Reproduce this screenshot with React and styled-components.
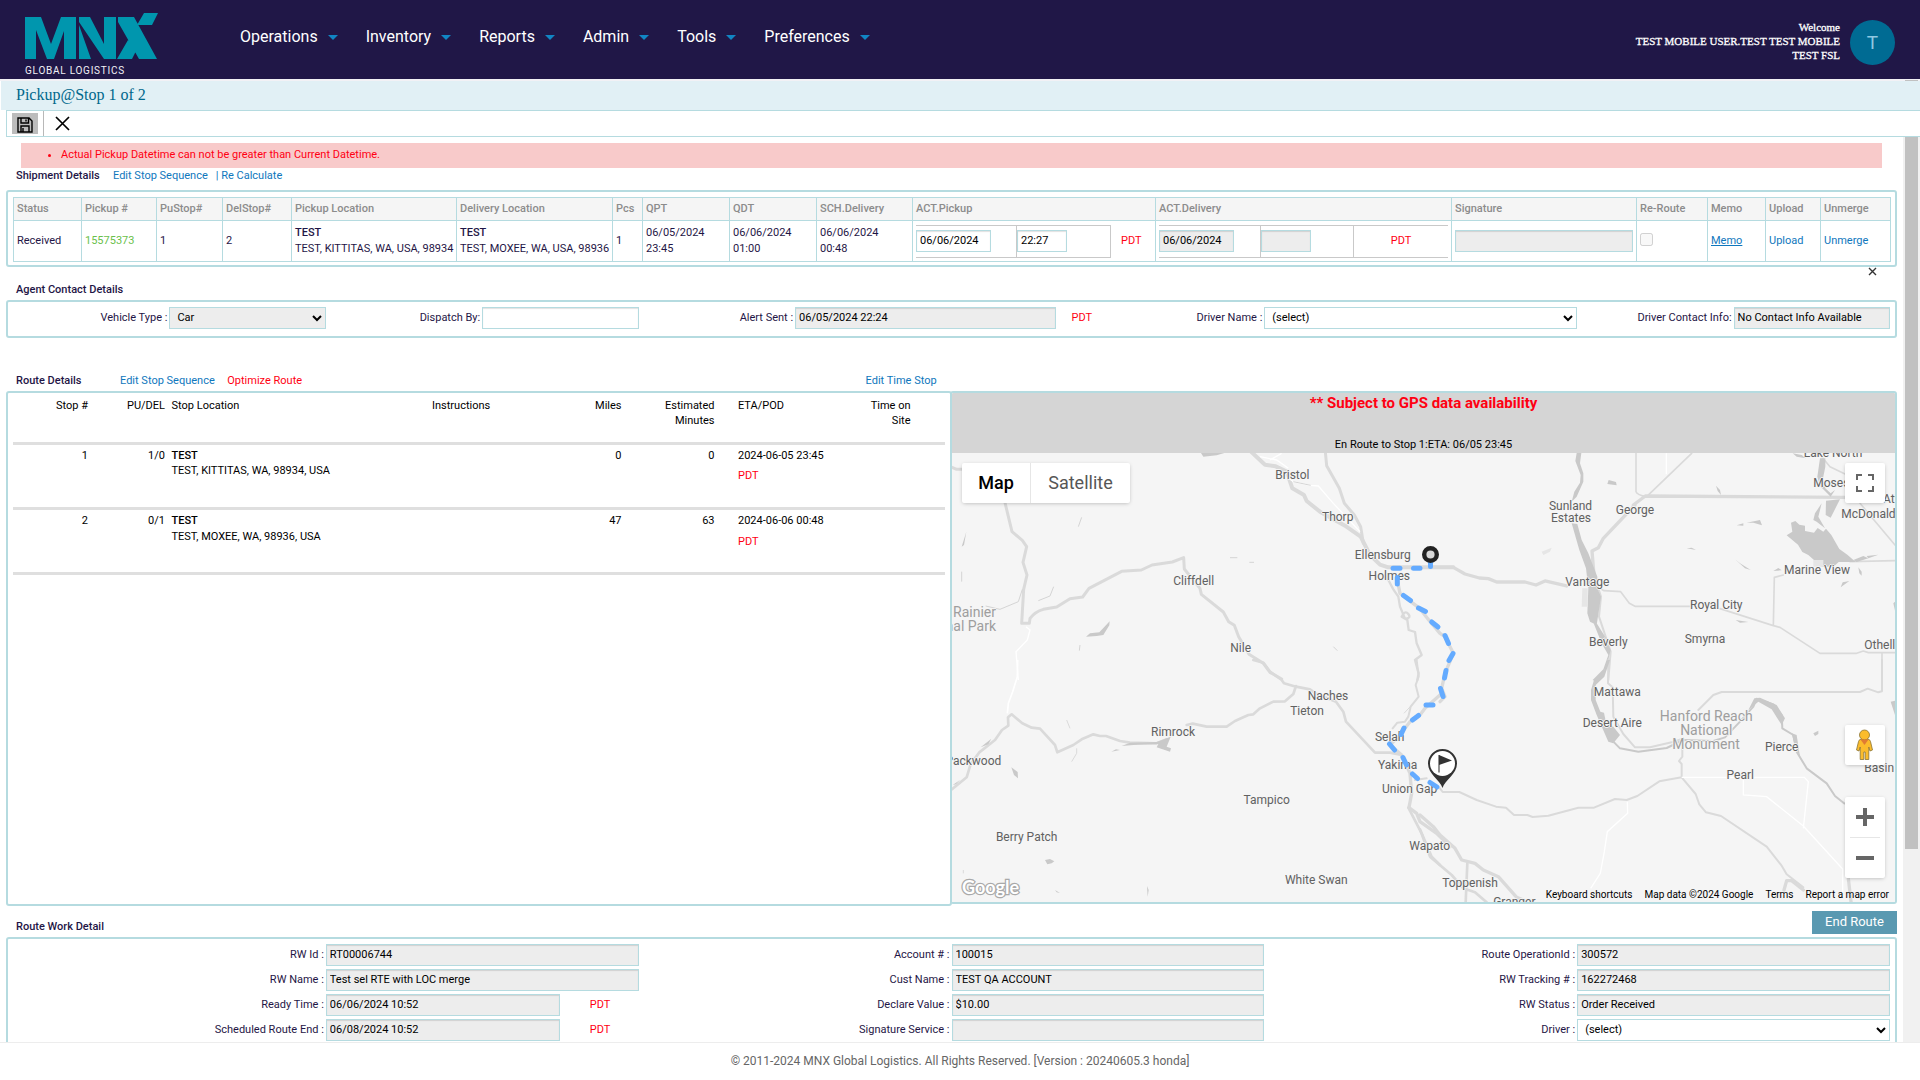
import React from "react";
import styled, { createGlobalStyle, css } from "styled-components";

const teal = "#b5dbe0";
const link = "#0f77bd";

const Global = createGlobalStyle`
  * { box-sizing: border-box; }
  body { margin: 0; font: 11px/16px Roboto, "Liberation Sans", sans-serif; color: #1f1646; background: #fff; overflow: hidden; }
  input, select { font: inherit; margin: 0; }
`;

const Page = styled.div`
  display: flex;
  flex-direction: column;
  width: 1920px;
  height: 1080px;
  overflow: hidden;
`;

/* ---------- header ---------- */
const Header = styled.header`
  display: flex;
  height: 79px;
  flex: none;
  background: #201747;
  padding: 13px 25px 0 25px;
`;
const Logo = styled.div`
  width: 215px;
  svg { display: block; }
`;
const LogoText = styled.div`
  margin-top: 2px;
  font-size: 10px;
  letter-spacing: 0.75px;
  line-height: 16px;
  color: #f0f0f5;
  white-space: nowrap;
`;
const Nav = styled.nav`
  display: flex;
  height: 48px;
  align-items: center;
  gap: 28px;
  flex: 1;
`;
const NavItem = styled.a`
  display: flex;
  align-items: center;
  font-size: 16px;
  line-height: 20px;
  color: #fff;
  &::after {
    content: "";
    margin: 1px 0 0 10px;
    border: 5px solid transparent;
    border-top: 5px solid #1185c4;
    border-bottom: 0;
  }
`;
const User = styled.div`
  margin: 7px 10px 0 0;
  font: 11px/14px "Liberation Serif", serif;
  -webkit-text-stroke: 0.3px #fff;
  color: #fff;
  text-align: right;
`;
const Avatar = styled.div`
  width: 45px;
  height: 45px;
  margin-top: 7px;
  border-radius: 50%;
  background: #006b93;
  color: #8fc8e2;
  font-size: 19px;
  line-height: 45px;
  text-align: center;
`;
const Strip = styled.div`
  flex: none;
  height: 2px;
  background: #f2f1f5;
  display: flex;
  justify-content: flex-end;
  padding: 1px 2px 0 0;
  &::after { content: ""; width: 13px; height: 1px; background: #c1c1c1; }
`;
const TitleBar = styled.div`
  flex: none;
  height: 29px;
  margin-left: 1px;
  padding-left: 15px;
  background: #e1f0f5;
  color: #00688c;
  font: 16px/27px "Liberation Serif", serif;
`;
const Toolbar = styled.div`
  flex: none;
  height: 27px;
  margin-left: 6px;
  border: 1px solid ${teal};
  border-right: 0;
  display: flex;
  align-items: center;
`;
const SaveButton = styled.div`
  width: 26px;
  height: 21px;
  margin: 0 5px;
  background: #bcbcbc;
  display: flex;
  align-items: flex-end;
  justify-content: center;
  padding-bottom: 1px;
`;
const CloseButton = styled.div`
  height: 25px;
  padding-left: 11px;
  border-left: 1px solid #b8b8b8;
  display: flex;
  align-items: center;
`;

/* ---------- page body ---------- */
const Body = styled.div`
  flex: none;
  height: 905px;
  display: flex;
  overflow: hidden;
`;
const Content = styled.main`
  width: 1903px;
  padding: 6px 6px 0 6px;
`;
const Track = styled.div`
  width: 17px;
  background: #f1f1f1;
  padding: 0 2px;
  &::before { content: ""; display: block; height: 712px; background: #c1c1c1; }
`;
const ErrorBox = styled.ul`
  margin: 0 15px;
  width: 1861px;
  height: 25px;
  padding: 0 0 0 40px;
  line-height: 23px;
  background: #f8caca;
  color: #ff0012;
`;
const Heading = styled.div`
  display: flex;
  width: 1891px;
  height: ${(p) => p.$h}px;
  padding: ${(p) => p.$top}px 0 0 10px;
  white-space: nowrap;
`;
const Title = styled.b`
  font-weight: 500;
  width: ${(p) => p.$w || "auto"};
`;
const Link = styled.a`
  color: ${(p) => (p.$red ? "#ff0012" : link)};
  text-decoration: ${(p) => (p.$line ? "underline" : "none")};
  margin-right: ${(p) => p.$gap || 0}px;
`;
const Push = styled.span`
  margin-left: ${(p) => p.$left}px;
`;
const Panel = styled.section`
  width: 1891px;
  height: ${(p) => p.$h}px;
  border: 2px solid ${teal};
  border-radius: 3px;
  padding: 5px;
`;

/* ---------- shipment table ---------- */
const Table = styled.table`
  width: 1877px;
  height: 64px;
  table-layout: fixed;
  border-collapse: collapse;
  white-space: nowrap;
  th, td { border: 1px solid ${teal}; padding: 0 3px; text-align: left; }
  th { height: 23px; background: #f5f5f5; color: #8c8c8c; font-weight: 500; }
  td { height: 41px; }
`;
const Green = styled.span`
  color: #6abf4b;
`;
const Field = styled.input`
  display: block;
  width: ${(p) => p.$w || "100%"};
  height: 22px;
  border: 1px solid ${teal};
  border-radius: 0;
  padding: 0 0 1px 3px;
  background: ${(p) => (p.$edit ? "#fff" : "#ededed")};
  color: #000;
  box-shadow: inset 0 1px 1px rgba(0, 0, 0, 0.12);
  outline: 0;
`;
const Select = styled.select`
  display: block;
  width: ${(p) => p.$w || "100%"};
  height: 22px;
  border: 1px solid ${teal};
  border-radius: 0;
  padding: 0 1px 1px 3px;
  background-color: ${(p) => (p.$gray ? "#ededed" : "#fff")};
  color: #000;
  outline: 0;
`;
const TimeGroup = styled.div`
  display: flex;
  align-items: center;
  height: 33px;
`;
const TimeCell = styled.div`
  width: ${(p) => p.$w}px;
  height: 33px;
  padding-top: ${(p) => p.$pad || 4}px;
  border: 0 solid #c9c9c9;
  border-width: 1px 0;
  ${(p) => p.$right && css`border-right-width: 1px;`}
`;
const Zone = styled.span`
  color: #ff0012;
  padding-left: ${(p) => p.$left || 0}px;
  ${(p) => p.$mid && css`line-height: 20px; display: block; text-align: center;`}
`;
const Check = styled.input`
  display: block;
  width: 13px;
  height: 13px;
  margin: 0 0 4px 0;
`;
const CloseX = styled.div`
  width: 1891px;
  height: 14px;
  padding: 0 20px 0 0;
  display: flex;
  justify-content: flex-end;
  align-items: flex-start;
`;

/* ---------- forms: twelve equal columns ---------- */
const FormRow = styled.div`
  display: grid;
  grid-template-columns: repeat(12, 1fr);
  height: 25px;
  line-height: 21px;
  align-items: start;
`;
const Label = styled.label`
  grid-column: span ${(p) => p.$span || 1};
  text-align: right;
  padding-right: 2px;
  white-space: nowrap;
`;
const Cell = styled.div`
  grid-column: span ${(p) => p.$span || 1};
  display: flex;
  min-width: 0;
`;

/* ---------- route ---------- */
const Route = styled.div`
  display: flex;
  width: 1891px;
  height: 515px;
  align-items: flex-start;
`;
const Stops = styled.section`
  width: 946px;
  height: 515px;
  border: 2px solid ${teal};
  border-radius: 3px;
  padding: 0 5px;
  color: #000;
`;
const StopRow = styled.div`
  display: grid;
  grid-template-columns: 75px 77px 267px 103px 86.5px 93px 196px 1fr;
  height: ${(p) => p.$h}px;
  padding-top: ${(p) => p.$top}px;
  border-bottom: 3px solid #dfdfdf;
  line-height: ${(p) => p.$line || 15}px;
`;
const StopCell = styled.div`
  text-align: ${(p) => (p.$right ? "right" : "left")};
  padding-left: ${(p) => p.$left || 0}px;
  b { font-weight: 500; }
`;
const EtaBox = styled.div`
  display: flex;
  justify-content: space-between;
  padding-left: 23.5px;
  text-align: right;
`;
const Pdt = styled.div`
  color: #ff0012;
  margin-top: 5px;
`;
const MapPanel = styled.section`
  width: 947px;
  height: 513px;
  margin-left: -2px;
  border: 2px solid ${teal};
  border-radius: 3px;
  overflow: hidden;
`;
const MapHead = styled.div`
  height: 60px;
  background: #d5d5d5;
  text-align: center;
  color: #000;
  padding-top: 2px;
  h4 { margin: 0 0 25px; font: 700 15px/17px Roboto, sans-serif; color: #ff0012; }
`;
const MapView = styled.div`
  position: relative;
  width: 943px;
  height: 449px;
  overflow: hidden;
  background: #f5f5f5;
  > svg { display: block; }
`;
const Place = styled.span`
  position: absolute;
  transform: translate(${(p) => (p.$anchor === "l" ? "0" : p.$anchor === "r" ? "-100%" : "-50%")}, -50%);
  font-size: ${(p) => (p.$park ? 14 : 12)}px;
  line-height: ${(p) => (p.$park ? 14 : 12)}px;
  color: ${(p) => (p.$park ? "#9e9e9e" : "#616161")};
  text-shadow: 1px 0 #f5f5f5, -1px 0 #f5f5f5, 0 1px #f5f5f5, 0 -1px #f5f5f5;
  text-align: center;
  white-space: pre;
`;
const Overlay = styled.svg`
  position: absolute;
  inset: 0;
`;
const Control = styled.div`
  position: absolute;
  right: 10px;
  top: ${(p) => p.$top}px;
  width: 40px;
  height: ${(p) => p.$h || 40}px;
  background: #fff;
  border-radius: 2px;
  box-shadow: 0 1px 4px -1px rgba(0, 0, 0, 0.3);
`;
const MapTypes = styled.div`
  position: absolute;
  left: 10px;
  top: 10px;
  display: flex;
  border-radius: 2px;
  background: #fff;
  box-shadow: 0 1px 4px -1px rgba(0, 0, 0, 0.3);
`;
const MapType = styled.div`
  width: ${(p) => p.$w}px;
  font-size: 18px;
  line-height: 40px;
  text-align: center;
  color: ${(p) => (p.$on ? "#000" : "#565656")};
  font-weight: ${(p) => (p.$on ? 500 : 400)};
  & + & { border-left: 1px solid #e6e6e6; }
`;
const Google = styled.div`
  position: absolute;
  left: 10px;
  bottom: 3px;
  font: 700 18px/24px Lato, sans-serif;
  color: #fff;
  -webkit-text-stroke: 2.5px #a9a9a9;
  paint-order: stroke fill;
`;
const Credits = styled.div`
  position: absolute;
  right: 0;
  bottom: 0;
  display: flex;
  gap: 12px;
  padding: 0 6px;
  font-size: 10px;
  line-height: 14px;
  color: #000;
`;
const RouteTitle = styled(Title)`
  padding-top: 8px;
`;
const EndButton = styled.button`
  margin: 0 0 0 auto;
  width: 85px;
  height: 23px;
  border: 0;
  padding: 0 0 2px;
  background: #5a99b1;
  color: #fff;
  font: 13px/21px Roboto, sans-serif;
`;
const Footer = styled.footer`
  flex: none;
  height: 38px;
  border-top: 1px solid #ededed;
  background: #fff;
  color: #666;
  font-size: 12px;
  line-height: 36px;
  text-align: center;
`;

const columns = [
  ["Status", 68], ["Pickup #", 75], ["PuStop#", 66], ["DelStop#", 69], ["Pickup Location", 165],
  ["Delivery Location", 156], ["Pcs", 30], ["QPT", 87], ["QDT", 87], ["SCH.Delivery", 96],
  ["ACT.Pickup", 243], ["ACT.Delivery", 296], ["Signature", 185], ["Re-Route", 71], ["Memo", 58],
  ["Upload", 55], ["Unmerge", 70],
];

const places = [
  ["Bristol", 1292.3, 475.3], ["Thorp", 1337.7, 517], ["Ellensburg", 1382.7, 555], ["Holmes", 1389.3, 576],
  ["Cliffdell", 1193.7, 581], ["Nile", 1240.7, 648.3], ["Rainier", 996, 612.3, "r", 1], ["nal Park", 996, 626.3, "r", 1],
  ["Lake North", 1833, 452.7], ["Moses Lake", 1813.3, 483.3, "l"], ["Atwater", 1883, 499, "l"], ["McDonald", 1841.3, 514, "l"],
  ["Sunland", 1570.5, 506.3], ["Estates", 1571, 518.3], ["George", 1635, 510.3], ["Vantage", 1587.3, 582.3],
  ["Marine View", 1817, 570.3], ["Royal City", 1716.3, 605.3], ["Beverly", 1608.3, 642], ["Smyrna", 1705, 639],
  ["Othello", 1864.3, 645, "l"], ["Naches", 1328, 696.3], ["Tieton", 1307, 711.3], ["Rimrock", 1173, 731.7],
  ["Selah", 1389.7, 737.3], ["Yakima", 1397.7, 764.6], ["Union Gap", 1409.6, 788.8], ["Packwood", 1001.3, 761, "r"],
  ["Tampico", 1266.7, 800.3], ["Berry Patch", 1026.7, 836.6], ["White Swan", 1316.3, 880.3], ["Wapato", 1429.7, 846.3],
  ["Mattawa", 1617.3, 692.3], ["Desert Aire", 1612.3, 723.3], ["Hanford Reach", 1706.3, 716.3, "c", 1],
  ["National", 1706.3, 730.3, "c", 1], ["Monument", 1706, 744.3, "c", 1], ["Pierce", 1781.7, 747.3], ["Pearl", 1740.3, 774.5],
  ["Basin", 1864.3, 768, "l"], ["Toppenish", 1470, 883], ["Granger", 1514.3, 902],
];

const VIEW = "952 453 943 449";

function Terrain() {
  const road = { fill: "none", stroke: "#dadada", strokeLinejoin: "round", strokeLinecap: "round" };
  return (
    <svg width="943" height="449" viewBox={VIEW}>
      <g transform="translate(940 380) scale(.33333)">
        <g {...road} strokeWidth="9">
          <path d="M36 262L50 268H70M195 368L216 455L247 481L260 500L249 547L261 585L251 628L245 730L268 730L270 715Q285 695 310 688L350 681L390 656L428 651L447 625L545 574L604 570L636 555L697 546L731 533L733 567L780 625L784 643L850 696L866 725L883 736L896 770L927 823L970 850L990 877L1025 897" />
          <path strokeWidth="12" d="M930 212L975 254L1007 259L1040 275L1057 325L1092 345L1100 363L1140 395L1215 437L1262 470L1290 525L1320 554L1345 562L1500 562L1540 562" />
          <path d="M1156 215L1160 257L1198 325L1213 370L1243 405L1262 440L1270 490" />
          <path strokeWidth="10" d="M1372 600L1380 640L1440 686L1468 722L1500 760L1515 770L1540 820L1515 880L1505 925L1515 950L1500 965" />
          <path strokeWidth="7" d="M1345 600L1360 628L1375 650L1380 680L1395 716Q1415 715 1405 702T1385 710L1402 720L1406 750L1425 756L1430 790L1445 825L1425 840L1436 880L1432 900" />
        </g>
        <path d="M783 219H853L830 226L790 230Z M438 770L450 760L478 757L509 724L508 736L490 765L470 768Z M65 500L79 455L72 495Z" fill="#c9c9c9" />
        <path d="M960 230L1010 240L1045 265M990 240L1025 220M1040 290L1060 305L1110 316L1135 318L1180 370L1260 455M258 740L270 750L262 780L228 815L235 900" fill="none" stroke="#fff" strokeWidth="4" />
        <path d="M137 678L180 688L235 665L247 628M295 662L330 648L341 620M425 412L415 440M420 795L418 812M1060 305L1112 316M1180 800L1192 812M65 575V605M870 533H892M928 547H942" fill="none" stroke="#d4d4d4" strokeWidth="3" />
      </g>
      <g transform="translate(1420 380) scale(.33333)">
        <g {...road} strokeWidth="10">
          <path d="M30 562H100L135 582L178 594L205 596L230 606L315 606L348 615L375 603L440 618" />
          <path d="M640 375L676 348L1275 352" />
          <path d="M645 375L550 475L535 503L516 513L524 610" />
          <path strokeWidth="5" d="M648 215V335Q650 345 680 350L815 220M540 625L552 632L602 635L628 670L645 679L810 679M900 686L1060 737L1080 742L1200 820H1310L1330 813L1345 818H1425M1060 737L1063 592L1090 585M1290 545L1425 542M1386 820V900M1205 230L1230 260L1275 282M1320 370L1425 495" />
          <path strokeWidth="6" d="M535 625L543 650L537 710L572 815L565 900" />
        </g>
        <g fill="#c9c9c9">
          <path d="M470 219H484L480 250L490 280V305L470 350L455 365L463 335L480 308L482 285L466 243Z" />
          <path d="M455 430L472 432L485 480L505 520L532 590V625L543 650L530 735L510 725L502 700L505 625L498 565L478 510Z" />
          <path d="M521 730L530 730L560 778L552 770L572 810L560 860L530 905L518 900L550 868L565 825L545 790Z" />
          <path d="M1100 466L1117 455L1113 428L1126 423L1138 434L1155 437V453L1182 458L1193 444L1210 455L1218 446L1234 465L1258 507L1282 524L1307 546L1256 546L1240 560H1205L1165 525L1147 516L1134 494Z" />
          <path d="M1200 235L1216 235V260L1208 300L1216 325L1232 340L1245 330L1232 350L1200 318L1192 290Z M1218 362L1260 358L1232 413L1217 405Z M1185 400L1205 370L1195 410L1215 445L1190 425L1180 420Z M1118 220L1145 225L1158 235L1130 230Z" />
          <path d="M566 300L588 306L590 316L562 312Z M888 317L900 330L903 345L893 333Z M980 428L1020 420L1026 436L1000 428Z M950 436L970 430V437Z M800 505L815 503L828 510Z M1060 573L1075 564L1085 571Z M1262 622L1268 607L1288 603Z M1315 562L1325 575V587L1318 580Z M945 538L960 550L992 570L975 565Z M947 720L985 726L960 728Z M1420 670L1425 665V692Z M1340 528L1375 524L1345 535Z M1300 540L1330 528L1345 535L1310 546Z" />
        </g>
        <path d="M365 515L395 503L390 515L370 525Z M487 625H503V680H485Z M1180 540H1210V560H1180Z" fill="#e6e6e6" />
        <path d="M739 220V283" stroke="#fff" strokeWidth="4" />
      </g>
      <g transform="translate(940 660) scale(.33333)">
        <g {...road} strokeWidth="8">
          <path d="M36 388L80 352L92 312L118 277L165 240L186 210L205 197L204 172L215 163L247 190L275 203L300 206L345 255L352 277L400 255L425 238L460 223L480 228H498L540 243L570 248L650 250L680 238" />
          <path d="M740 195L758 191L800 200H860L885 183L925 165L940 163L960 145L1000 125L1035 124L1060 102L1068 78M940 0L970 8L990 35L1025 60L1032 70L1068 80L1110 88L1130 102L1188 125L1210 155L1218 185L1305 278L1350 278L1385 285" />
          <path strokeWidth="6" d="M1430 0L1436 50L1427 75L1436 110L1412 140L1405 170L1395 185L1372 188L1358 205M1425 360L1460 355" />
          <path strokeWidth="10" d="M1500 105L1455 145L1440 165L1410 185L1375 230L1350 255L1385 285L1410 340L1415 400L1407 443L1430 460L1440 485L1490 520L1530 560" />
          <path strokeWidth="8" d="M1405 443L1445 520L1475 590L1500 615" />
        </g>
        <path d="M545 258L570 248L650 246L692 230L680 260L693 265L690 275L650 262L655 252L580 255Z M514 275L528 268L540 270Z M214 322L233 336L234 355L222 345Z M315 600L330 597L343 604L335 610L322 613Z M122 262L154 236L145 253Z M621 678L626 690L623 710Z M345 690L360 699L350 697Z M38 375L60 360L48 373Z" fill="#c9c9c9" />
        <path d="M233 0L232 50L218 95L205 130L202 160" fill="none" stroke="#fff" strokeWidth="5" />
        <path d="M410 265V280L395 305M380 180L390 205M1392 160L1420 130M70 630V640" fill="none" stroke="#dadada" strokeWidth="3" />
      </g>
      <g transform="translate(1420 660) scale(.33333)">
        <g {...road} strokeWidth="6">
          <path d="M60 385L68 396H118L170 420L228 440L258 443L282 465H322L338 471L385 467L475 443H522L585 417L620 420L652 408L718 364L785 352M785 352L827 402L838 433L858 457L903 468L1040 560L1085 617L1100 643L1150 682M785 352V312L777 303L787 290V265" />
          <path d="M565 0L564 70L578 82L580 170L610 222L645 262H690L755 247L790 235M835 150L880 105L905 96H1320L1343 86L1375 97L1386 94V0" />
          <path strokeWidth="10" d="M0 465L40 500L60 525L105 565L125 600L165 610L190 630L235 650L290 712L320 725" />
          <path strokeWidth="8" d="M0 508L30 590L95 645L130 685L165 697L200 727M142 610L137 727" />
          <path strokeWidth="10" d="M1285 655L1293 725M1092 690L1100 662H1115L1150 690" />
        </g>
        <path d="M570 0L553 50L527 75V120L541 155L552 158L556 178L580 200L600 225L580 250L565 245L530 165L513 120V90L522 60L553 30L562 0Z" fill="#c9c9c9" />
        <path d="M580 245L600 265L655 275L740 264L790 240L880 243L915 232L960 185L1000 140L1010 116L1060 133L1085 165L1087 205L1120 225L1130 275L1160 325L1220 370L1245 408L1275 432" fill="none" stroke="#c9c9c9" strokeWidth="6" strokeLinejoin="round" />
        <path d="M985 150L1003 115L1020 113L1070 135L1095 175L1085 195L1055 148L1015 125Z M1115 220L1130 225L1140 290L1125 260Z M1180 220L1195 212V222L1185 228Z M1412 125L1425 122V165Z" fill="#c9c9c9" />
        <path d="M785 352H1153L1165 365L1150 505M970 355V405L1040 410L1150 498L1268 627V700M622 425L623 460L562 515L553 575L541 640L512 685" fill="none" stroke="#fff" strokeWidth="4" />
      </g>
    </svg>
  );
}

function RouteLine() {
  return (
    <Overlay width="943" height="449" viewBox={VIEW}>
      <g stroke="#64abff" strokeWidth="5" strokeLinecap="round" fill="none">
        <path d="M1393 568.3H1400M1413.5 568.3H1420M1430.5 560V566.5" />
        <path d="M1397.3 577.5V584M1403.5 595.5L1410.5 600.5M1418.5 608L1425.5 611.5M1431.7 622L1438 627" />
        <path d="M1445 635.5L1448.5 643.5M1453 653.5L1449 660.5M1446 670.5L1444.5 678" />
        <path d="M1440.5 688.5L1443 696.5M1426 705H1433M1412.5 720L1418.5 715.5M1404 728L1401 734.5" />
        <path d="M1389.5 744L1394.5 750M1403 757.5L1406.5 765M1412.5 774L1417.5 778.5M1430 782.5L1437 787" />
      </g>
      <circle cx="1430.5" cy="554.5" r="6.3" fill="#d8d8d8" stroke="#222" strokeWidth="4.4" />
      <path d="M1442.5 788C1440 780 1428 774 1428 763.5A14.5 14.5 0 0 1 1457 763.5C1457 774 1445 780 1442.5 788Z" fill="#333" />
      <circle cx="1442.5" cy="763.5" r="12.5" fill="#fff" />
      <path d="M1439 755V772.5" stroke="#777" strokeWidth="1.6" />
      <path d="M1439 755L1452 760.5L1439 765Z" fill="#333" />
    </Overlay>
  );
}

const Ro = ({ v, w }) => <Field readOnly value={v} $w={w} />;

const stops = [
  { n: 1, pd: "1/0", at: "TEST, KITTITAS, WA, 98934, USA", miles: 0, min: 0, eta: "2024-06-05 23:45", line: 15 },
  { n: 2, pd: "0/1", at: "TEST, MOXEE, WA, 98936, USA", miles: 47, min: 63, eta: "2024-06-06 00:48", line: 16 },
];

export default function App() {
  return (
    <Page>
      <Global />
      <Header>
        <Logo>
          <svg width="134" height="48" viewBox="0 0 134 48" fill="#0096ae">
            <path d="M0 4H16L26 31L36 4H51V46H39V18L29 46H22L11 17V46H0Z" />
            <path d="M54 12L66 46H54Z M54 4H65L79 31V4H91V46H79L54 9Z" />
            <path d="M93 4H109L132 46H114L93 9Z M119 0H133L127 12H112Z M92 46L103 27L111 38L107 46Z" />
          </svg>
          <LogoText>GLOBAL LOGISTICS</LogoText>
        </Logo>
        <Nav>
          {["Operations", "Inventory", "Reports", "Admin", "Tools", "Preferences"].map((n) => <NavItem key={n}>{n}</NavItem>)}
        </Nav>
        <User>Welcome<br />TEST MOBILE USER.TEST TEST MOBILE<br />TEST FSL</User>
        <Avatar>T</Avatar>
      </Header>
      <Strip />
      <TitleBar>Pickup@Stop 1 of 2</TitleBar>
      <Toolbar>
        <SaveButton>
          <svg width="16" height="16" viewBox="0 0 16 16" fill="none" stroke="#000" strokeWidth="1.4">
            <path d="M1 1H12L15 4V15H1ZM4 1V6H11.5V1M4 15V9H12V15M9 2.5V4.5M6 11V15" />
          </svg>
        </SaveButton>
        <CloseButton>
          <svg width="15" height="15" viewBox="0 0 15 15" stroke="#000" strokeWidth="1.7"><path d="M1 1L14 14M14 1L1 14" /></svg>
        </CloseButton>
      </Toolbar>
      <Body>
        <Content>
          <ErrorBox><li>Actual Pickup Datetime can not be greater than Current Datetime.</li></ErrorBox>
          <Heading $h={22} $top={0}>
            <Title $w="97px">Shipment Details</Title>
            <Link $gap={8}>Edit Stop Sequence</Link>
            <Link>| Re Calculate</Link>
          </Heading>
          <Panel $h={77}>
            <Table>
              <colgroup>{columns.map(([n, w]) => <col key={n} width={w} />)}</colgroup>
              <thead><tr>{columns.map(([n]) => <th key={n}>{n}</th>)}</tr></thead>
              <tbody>
                <tr>
                  <td>Received</td>
                  <td><Green>15575373</Green></td>
                  <td>1</td>
                  <td>2</td>
                  <td><Title>TEST</Title><br />TEST, KITTITAS, WA, USA, 98934</td>
                  <td><Title>TEST</Title><br />TEST, MOXEE, WA, USA, 98936</td>
                  <td>1</td>
                  <td>06/05/2024<br />23:45</td>
                  <td>06/06/2024<br />01:00</td>
                  <td>06/06/2024<br />00:48</td>
                  <td>
                    <TimeGroup>
                      <TimeCell $w={101} $right><Field $edit readOnly value="06/06/2024" $w="75px" /></TimeCell>
                      <TimeCell $w={94} $right><Field $edit readOnly value="22:27" $w="50px" /></TimeCell>
                      <Zone $left={10}>PDT</Zone>
                    </TimeGroup>
                  </td>
                  <td>
                    <TimeGroup>
                      <TimeCell $w={102} $right><Field readOnly value="06/06/2024" $w="75px" /></TimeCell>
                      <TimeCell $w={93} $right><Field readOnly value="" $w="50px" /></TimeCell>
                      <TimeCell $w={94} $pad={5}><Zone $mid>PDT</Zone></TimeCell>
                    </TimeGroup>
                  </td>
                  <td><Field readOnly value="" $w="178px" /></td>
                  <td><Check type="checkbox" disabled /></td>
                  <td><Link $line>Memo</Link></td>
                  <td><Link>Upload</Link></td>
                  <td><Link>Unmerge</Link></td>
                </tr>
              </tbody>
            </Table>
          </Panel>
          <CloseX>
            <svg width="9" height="9" viewBox="0 0 9 9" stroke="#333" strokeWidth="1.4"><path d="M1 1L8 8M8 1L1 8" /></svg>
          </CloseX>
          <Heading $h={19} $top={1}><Title>Agent Contact Details</Title></Heading>
          <Panel $h={38}>
            <FormRow>
              <Label>Vehicle Type :</Label>
              <Cell><Select $gray defaultValue="Car"><option>Car</option></Select></Cell>
              <Label>Dispatch By:</Label>
              <Cell><Field $edit readOnly value="" /></Cell>
              <Label>Alert Sent :</Label>
              <Cell $span={2}><Field readOnly value="06/05/2024 22:24" $w="261px" /><Zone $left={15.5}>PDT</Zone></Cell>
              <Label>Driver Name :</Label>
              <Cell $span={2}><Select defaultValue="(select)"><option>(select)</option></Select></Cell>
              <Label>Driver Contact Info:</Label>
              <Cell><Ro v="No Contact Info Available" /></Cell>
            </FormRow>
          </Panel>
          <Heading $h={53} $top={35}>
            <Title $w="104px">Route Details</Title>
            <Link $gap={12.5}>Edit Stop Sequence</Link>
            <Link $red>Optimize Route</Link>
            <Push $left={563.5}><Link>Edit Time Stop</Link></Push>
          </Heading>
          <Route>
            <Stops>
              <StopRow $h={52} $top={5}>
                <StopCell $right>Stop #</StopCell>
                <StopCell $right>PU/DEL</StopCell>
                <StopCell $left={6.5}>Stop Location</StopCell>
                <StopCell>Instructions</StopCell>
                <StopCell $right>Miles</StopCell>
                <StopCell $right>Estimated<br />Minutes</StopCell>
                <EtaBox><span>ETA/POD</span><span>Time on<br />Site</span></EtaBox>
              </StopRow>
              {stops.map((s) => (
                <StopRow key={s.n} $h={65} $top={3} $line={s.line}>
                  <StopCell $right>{s.n}</StopCell>
                  <StopCell $right>{s.pd}</StopCell>
                  <StopCell $left={6.5}><b>TEST</b><br />{s.at}</StopCell>
                  <StopCell />
                  <StopCell $right>{s.miles}</StopCell>
                  <StopCell $right>{s.min}</StopCell>
                  <StopCell $left={23.5}>{s.eta}<Pdt>PDT</Pdt></StopCell>
                </StopRow>
              ))}
            </Stops>
            <MapPanel>
              <MapHead>
                <h4>** Subject to GPS data availability</h4>
                En Route to Stop 1:ETA: 06/05 23:45
              </MapHead>
              <MapView>
                <Terrain />
                {places.map(([n, x, y, a, park]) => (
                  <Place key={n} $anchor={a} $park={park} style={{ left: x - 952, top: y - 453 }}>{n}</Place>
                ))}
                <RouteLine />
                <MapTypes>
                  <MapType $on $w={68}>Map</MapType>
                  <MapType $w={100}>Satellite</MapType>
                </MapTypes>
                <Control $top={10}>
                  <svg width="40" height="40" fill="none" stroke="#666" strokeWidth="2"><path d="M12 17V12H17M23 12H28V17M28 23V28H23M17 28H12V23" /></svg>
                </Control>
                <Control $top={272}>
                  <svg width="40" height="40" fill="#fbbc2c" stroke="#8a7434" strokeWidth="0.8">
                    <path d="M13.5 16.5Q14 14 17 14H22Q25 14 25.5 16.5L27.5 25L25 26L23.8 22V34.5H20.2V27H18.8V34.5H15.2V22L14 26L11.5 25Z" />
                    <circle cx="19.5" cy="10" r="5" />
                    <path d="M15.5 14.5H23.5L19.5 20Z" fill="#e07b33" stroke="none" />
                  </svg>
                </Control>
                <Control $top={344} $h={81}>
                  <svg width="40" height="81" stroke="#666" strokeWidth="4"><path d="M11 20H29M20 11V29M11 61H29" /><path d="M5 40.5H35" stroke="#e6e6e6" strokeWidth="1" /></svg>
                </Control>
                <Google>Google</Google>
                <Credits><span>Keyboard shortcuts</span><span>Map data ©2024 Google</span><span>Terms</span><span>Report a map error</span></Credits>
              </MapView>
            </MapPanel>
          </Route>
          <Heading $h={31} $top={5}>
            <RouteTitle>Route Work Detail</RouteTitle>
            <EndButton>End Route</EndButton>
          </Heading>
          <Panel $h={200}>
            <FormRow>
              <Label $span={2}>RW Id :</Label><Cell $span={2}><Ro v="RT00006744" /></Cell>
              <Label $span={2}>Account # :</Label><Cell $span={2}><Ro v="100015" /></Cell>
              <Label $span={2}>Route OperationId :</Label><Cell $span={2}><Ro v="300572" /></Cell>
            </FormRow>
            <FormRow>
              <Label $span={2}>RW Name :</Label><Cell $span={2}><Ro v="Test sel RTE with LOC merge" /></Cell>
              <Label $span={2}>Cust Name :</Label><Cell $span={2}><Ro v="TEST QA ACCOUNT" /></Cell>
              <Label $span={2}>RW Tracking # :</Label><Cell $span={2}><Ro v="162272468" /></Cell>
            </FormRow>
            <FormRow>
              <Label $span={2}>Ready Time :</Label><Cell $span={2}><Ro v="06/06/2024 10:52" w="234px" /><Zone $left={30}>PDT</Zone></Cell>
              <Label $span={2}>Declare Value :</Label><Cell $span={2}><Ro v="$10.00" /></Cell>
              <Label $span={2}>RW Status :</Label><Cell $span={2}><Ro v="Order Received" /></Cell>
            </FormRow>
            <FormRow>
              <Label $span={2}>Scheduled Route End :</Label><Cell $span={2}><Ro v="06/08/2024 10:52" w="234px" /><Zone $left={30}>PDT</Zone></Cell>
              <Label $span={2}>Signature Service :</Label><Cell $span={2}><Ro v="" /></Cell>
              <Label $span={2}>Driver :</Label><Cell $span={2}><Select defaultValue="(select)"><option>(select)</option></Select></Cell>
            </FormRow>
          </Panel>
        </Content>
        <Track />
      </Body>
      <Footer>© 2011-2024 MNX Global Logistics. All Rights Reserved. [Version : 20240605.3 honda]</Footer>
    </Page>
  );
}
